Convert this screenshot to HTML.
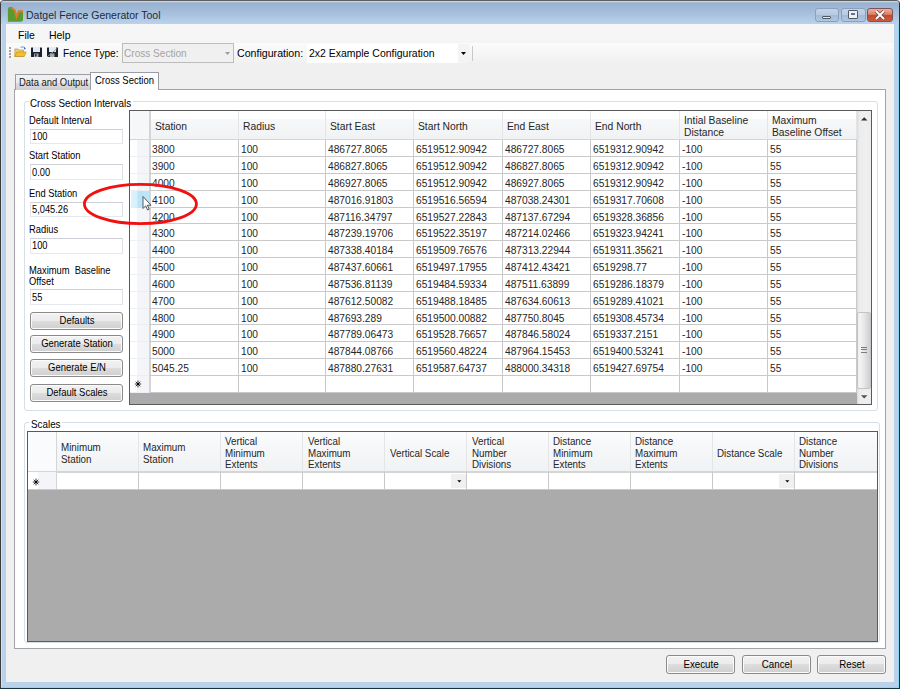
<!DOCTYPE html><html><head><meta charset='utf-8'><style>
*{margin:0;padding:0;box-sizing:border-box}
html,body{width:900px;height:689px;overflow:hidden;background:#ffffff;font-family:"Liberation Sans", sans-serif;position:relative}
.a{position:absolute}
.t{position:absolute;white-space:nowrap;color:#000;line-height:1}
.btn{position:absolute;border:1px solid #8a8a8a;border-radius:3px;
 background:linear-gradient(#f2f2f2 0%,#ebebeb 50%,#dddddd 50%,#cfcfcf 100%);
 box-shadow: inset 0 0 0 1px #fbfbfb;}
.tb{position:absolute;border:1px solid #cdd0d6;border-left-color:#e2e3ea;border-right-color:#dbdfe6;border-bottom-color:#e3e9ef;background:#fff}
.hl{position:absolute;background:#d5d5d5}
</style></head><body><div style='position:absolute;left:0;top:0;width:900px;height:689px;filter:none'>
<div class='a' style='left:0;top:0;width:900px;height:689px;background:#b9d1ea;border:1px solid #153440;border-top-color:#5e5e5e;border-left-color:#3c3c3c;border-radius:4px 4px 0 0'></div>
<div class='a' style='left:1px;top:1px;width:898px;height:23px;background:linear-gradient(#d0deec 0px,#97b1d0 2px,#a6bfdc 12px,#bad2ea 23px);border-radius:3px 3px 0 0'></div>
<div class='a' style='left:1px;top:24px;width:1px;height:664px;background:#d5e3f1'></div>
<div class='a' style='left:898px;top:24px;width:1px;height:664px;background:#8fd6f2'></div>
<div class='a' style='left:1px;top:687px;width:898px;height:1px;background:#8fd6f2'></div>
<div class='a' style='left:6px;top:24px;width:888px;height:658px;background:#f0f0f0'></div>
<div class='a' style='left:6px;top:24px;width:888px;height:19px;background:linear-gradient(#f6f6f6,#f5f5f5)'></div>
<div class='a' style='left:6px;top:43px;width:888px;height:21px;background:linear-gradient(#fbfbfb 0%,#f6f6f6 50%,#f0f0f0 100%)'></div>
<svg class='a' style='left:6px;top:5px' width='20' height='19' viewBox='6 5 20 19'>
<path d='M7.9 9.2 Q7.9 6.9 10.2 6.9 L11.8 6.9 L15.5 10.6 L16.6 16.6 L18.4 10.6 L23 10.6 L23 19.3 Q23 21.8 20.5 21.8 L7.9 21.8 Z' fill='#5a9a2e'/>
<path d='M11.4 7.6 L15 10.6 L16.5 16.8 L18.6 11.2 L23 11.2' stroke='#e77b22' stroke-width='1.9' fill='none' stroke-linejoin='miter'/>
</svg>
<div class='t' style='left:25.57px;top:10.36px;font-size:10.9px;color:#1e2a3a;transform:scaleX(0.963);transform-origin:0 0;'>Datgel Fence Generator Tool</div>
<div class='a' style='left:815px;top:8px;width:24px;height:14px;border:1px solid #8aa0bc;border-radius:3px;background:linear-gradient(#c3d4e8 0%,#b4c9e2 50%,#a3bbd7 50%,#afc6e0 100%)'></div>
<div class='a' style='left:822px;top:15.5px;width:9px;height:3.5px;background:#e8e8e8;border:1px solid #505a66;border-radius:1px'></div>
<div class='a' style='left:841px;top:8px;width:25px;height:14px;border:1px solid #8aa0bc;border-radius:3px;background:linear-gradient(#c3d4e8 0%,#b4c9e2 50%,#a3bbd7 50%,#afc6e0 100%)'></div>
<div class='a' style='left:848px;top:10px;width:9.5px;height:8.5px;background:#f0f0f0;border:1px solid #505a66;border-radius:1px'></div>
<div class='a' style='left:850.5px;top:12.5px;width:4.5px;height:2.5px;background:#5a7898'></div>
<div class='a' style='left:867px;top:8px;width:26px;height:14px;border:1px solid #7c5458;border-radius:3px;background:linear-gradient(#eeb0a0 0%,#dc8068 45%,#c44a2c 50%,#cc5a3c 100%)'></div>
<svg class='a' style='left:874px;top:10px' width='12' height='10' viewBox='0 0 12 10'><path d='M2 1 L10 9 M10 1 L2 9' stroke='#6a3a38' stroke-width='3.2'/><path d='M2 1 L10 9 M10 1 L2 9' stroke='#fff' stroke-width='2'/></svg>

<div class='t' style='left:18.37px;top:29.96px;font-size:10.9px;color:#000;transform:scaleX(0.96);transform-origin:0 0;'>File</div>
<div class='t' style='left:49.07px;top:29.96px;font-size:10.9px;color:#000;transform:scaleX(0.96);transform-origin:0 0;'>Help</div>
<div class='a' style='left:9px;top:47px;width:2px;height:2px;background:#a0a0a0'></div>
<div class='a' style='left:9px;top:50px;width:2px;height:2px;background:#a0a0a0'></div>
<div class='a' style='left:9px;top:53px;width:2px;height:2px;background:#a0a0a0'></div>
<div class='a' style='left:9px;top:56px;width:2px;height:2px;background:#a0a0a0'></div>
<svg class='a' style='left:14px;top:46px' width='13' height='12' viewBox='0 0 13 12'>
<path d='M0.8 3 L4.2 3 L5.2 4 L9.5 4 L9.5 10.5 L0.8 10.5 Z' fill='#e9cf7a' stroke='#c09a3a' stroke-width='0.7'/>
<path d='M0.8 10.5 L2.8 6 L12.2 6 L10.2 10.5 Z' fill='#f2bf2e' stroke='#c4922a' stroke-width='0.7'/>
<path d='M6.5 1.5 Q9 0 11 2' stroke='#8fb0d8' stroke-width='1.1' fill='none'/>
<path d='M10 1 L12 2.8 L10 3.5 Z' fill='#3c6cb8'/>
</svg>
<svg class='a' style='left:31px;top:47px' width='11' height='10' viewBox='0 0 11 10'>
<rect x='0' y='0.5' width='11' height='9.5' fill='#1b2230' rx='0.5'/>
<rect x='2' y='0' width='7' height='5' fill='#e4ebf3'/>
<rect x='3' y='6.5' width='4.5' height='3.5' fill='#a8a8a8'/>
<rect x='4' y='7' width='1.5' height='2.5' fill='#303030'/>
</svg>
<svg class='a' style='left:47px;top:47px' width='11' height='10' viewBox='0 0 11 10'>
<rect x='0' y='0.5' width='11' height='9.5' fill='#1b2230' rx='0.5'/>
<rect x='2' y='0' width='7' height='5' fill='#e4ebf3'/>
<rect x='3' y='6.5' width='4.5' height='3.5' fill='#a8a8a8'/>
<path d='M0 10 L10 1.5' stroke='#9a9a9a' stroke-width='1'/>
</svg>
<div class='t' style='left:62.89px;top:48.06px;font-size:10.9px;color:#000;transform:scaleX(0.93);transform-origin:0 0;'>Fence Type:</div>
<div class='a' style='left:122px;top:43px;width:112px;height:20px;border:1px solid #bcbcbc;background:#f0f0f0'></div>
<div class='t' style='left:123.59px;top:48.46px;font-size:10.9px;color:#a3a3a3;transform:scaleX(0.925);transform-origin:0 0;'>Cross Section</div>
<svg class='a' style='left:225px;top:52px' width='5' height='3'><path d='M0 0 L5 0 L2.5 3 Z' fill='#9a9a9a'/></svg>
<div class='t' style='left:236.86px;top:48.06px;font-size:10.9px;color:#000;transform:scaleX(0.975);transform-origin:0 0;'>Configuration:</div>
<div class='a' style='left:307px;top:44px;width:162px;height:19px;background:#fff'></div>
<div class='a' style='left:458px;top:44px;width:11px;height:19px;background:#f4f4f4'></div>
<div class='t' style='left:309.07px;top:48.16px;font-size:10.9px;color:#000;transform:scaleX(0.96);transform-origin:0 0;'>2x2 Example Configuration</div>
<svg class='a' style='left:461px;top:52px' width='5' height='3'><path d='M0 0 L5 0 L2.5 3 Z' fill='#000'/></svg>
<div class='a' style='left:472px;top:46px;width:1px;height:15px;background:#c8c8c8'></div>
<div class='a' style='left:14px;top:89px;width:872px;height:560px;border:1px solid #a0a3aa;background:#fff'></div>
<div class='a' style='left:15px;top:74px;width:76px;height:16px;border:1px solid #9a9da5;border-bottom:none;background:linear-gradient(#f2f2f2 0%,#ebebeb 50%,#dddddd 50%,#cfcfcf 100%)'></div>
<div class='t' style='left:19.14px;top:78.05px;font-size:10.3px;color:#1a1a1a;transform:scaleX(0.915);transform-origin:0 0;'>Data and Output</div>
<div class='a' style='left:90px;top:72px;width:69px;height:18px;border:1px solid #9a9da5;border-bottom:none;background:#fff'></div>
<div class='t' style='left:94.64px;top:75.95px;font-size:10.3px;color:#000;transform:scaleX(0.92);transform-origin:0 0;'>Cross Section</div>
<div class='a' style='left:24px;top:101px;width:854px;height:310px;border:1px solid #d5dfe5;border-radius:3px'></div>
<div class='a' style='left:29px;top:96px;width:104px;height:10px;background:#fff'></div>
<div class='t' style='left:29.71px;top:98.19px;font-size:10.7px;color:#000;transform:scaleX(0.92);transform-origin:0 0;'>Cross Section Intervals</div>
<div class='t' style='left:28.95px;top:115.68px;font-size:10.1px;color:#000;transform:scaleX(0.925);transform-origin:0 0;'>Default Interval</div>
<div class='t' style='left:28.95px;top:151.48px;font-size:10.1px;color:#000;transform:scaleX(0.925);transform-origin:0 0;'>Start Station</div>
<div class='t' style='left:28.95px;top:188.98px;font-size:10.1px;color:#000;transform:scaleX(0.925);transform-origin:0 0;'>End Station</div>
<div class='t' style='left:28.95px;top:225.28px;font-size:10.1px;color:#000;transform:scaleX(0.925);transform-origin:0 0;'>Radius</div>
<div class='t' style='left:28.95px;top:266.08px;font-size:10.1px;color:#000;transform:scaleX(0.925);transform-origin:0 0;'>Maximum&nbsp; Baseline</div>
<div class='t' style='left:28.95px;top:276.98px;font-size:10.1px;color:#000;transform:scaleX(0.925);transform-origin:0 0;'>Offset</div>
<div class='tb' style='left:30px;top:128.5px;width:93px;height:15.5px'></div>
<div class='t' style='left:31.95px;top:131.85px;font-size:10.3px;color:#000;transform:scaleX(0.9);transform-origin:0 0;'>100</div>
<div class='tb' style='left:30px;top:164.4px;width:93px;height:15.5px'></div>
<div class='t' style='left:31.95px;top:167.75px;font-size:10.3px;color:#000;transform:scaleX(0.9);transform-origin:0 0;'>0.00</div>
<div class='tb' style='left:30px;top:201.9px;width:93px;height:15.5px'></div>
<div class='t' style='left:31.95px;top:205.25px;font-size:10.3px;color:#000;transform:scaleX(0.9);transform-origin:0 0;'>5,045.26</div>
<div class='tb' style='left:30px;top:238.0px;width:93px;height:15.5px'></div>
<div class='t' style='left:31.95px;top:241.35px;font-size:10.3px;color:#000;transform:scaleX(0.9);transform-origin:0 0;'>100</div>
<div class='tb' style='left:30px;top:289.3px;width:93px;height:15.5px'></div>
<div class='t' style='left:31.95px;top:292.65px;font-size:10.3px;color:#000;transform:scaleX(0.9);transform-origin:0 0;'>55</div>
<div class='btn' style='left:30px;top:312.3px;width:93px;height:18px'></div>
<div class='t' style='left:-23.50px;width:200px;text-align:center;top:316.15px;font-size:10.3px;color:#000;transform:scaleX(0.92);transform-origin:50% 0'>Defaults</div>
<div class='btn' style='left:30px;top:335px;width:93px;height:18px'></div>
<div class='t' style='left:-23.50px;width:200px;text-align:center;top:338.85px;font-size:10.3px;color:#000;transform:scaleX(0.92);transform-origin:50% 0'>Generate Station</div>
<div class='btn' style='left:30px;top:359.4px;width:93px;height:18px'></div>
<div class='t' style='left:-23.50px;width:200px;text-align:center;top:363.25px;font-size:10.3px;color:#000;transform:scaleX(0.92);transform-origin:50% 0'>Generate E/N</div>
<div class='btn' style='left:30px;top:383.8px;width:93px;height:18px'></div>
<div class='t' style='left:-23.50px;width:200px;text-align:center;top:387.65px;font-size:10.3px;color:#000;transform:scaleX(0.92);transform-origin:50% 0'>Default Scales</div>
<div class='a' style='left:129px;top:110px;width:743px;height:295px;border:1px solid #5a5a5a;background:#ababab'></div>
<div class='a' style='left:130px;top:111px;width:726.5px;height:28px;background:linear-gradient(#ffffff 0%,#ffffff 28%,#f7f8fa 29%,#f1f2f4 100%)'></div>
<div class='a' style='left:130px;top:138.5px;width:726.5px;height:2px;background:#d5d5d5'></div>
<div class='a' style='left:130px;top:140px;width:726.5px;height:252.71999999999997px;background:#fff'></div>
<div class='a' style='left:130px;top:140px;width:19px;height:252.71999999999997px;background:linear-gradient(90deg,#ffffff 0%,#ffffff 37%,#f4f5f8 38%,#f4f5f8 100%)'></div>
<div class='a' style='left:130px;top:111px;width:19px;height:28px;background:#f6f7f9'></div>
<div class='hl' style='left:149px;top:111px;width:1.6px;height:281.71999999999997px'></div>
<div class='hl' style='left:237.6px;top:111px;width:1px;height:28px;background:#e4e5e7'></div>
<div class='hl' style='left:237.6px;top:140px;width:1px;height:252.71999999999997px;background:#c9c9c9'></div>
<div class='hl' style='left:325.05px;top:111px;width:1px;height:28px;background:#e4e5e7'></div>
<div class='hl' style='left:325.05px;top:140px;width:1px;height:252.71999999999997px;background:#c9c9c9'></div>
<div class='hl' style='left:412.9px;top:111px;width:1px;height:28px;background:#e4e5e7'></div>
<div class='hl' style='left:412.9px;top:140px;width:1px;height:252.71999999999997px;background:#c9c9c9'></div>
<div class='hl' style='left:502.0px;top:111px;width:1px;height:28px;background:#e4e5e7'></div>
<div class='hl' style='left:502.0px;top:140px;width:1px;height:252.71999999999997px;background:#c9c9c9'></div>
<div class='hl' style='left:590.05px;top:111px;width:1px;height:28px;background:#e4e5e7'></div>
<div class='hl' style='left:590.05px;top:140px;width:1px;height:252.71999999999997px;background:#c9c9c9'></div>
<div class='hl' style='left:679.0px;top:111px;width:1px;height:28px;background:#e4e5e7'></div>
<div class='hl' style='left:679.0px;top:140px;width:1px;height:252.71999999999997px;background:#c9c9c9'></div>
<div class='hl' style='left:767.05px;top:111px;width:1px;height:28px;background:#e4e5e7'></div>
<div class='hl' style='left:767.05px;top:140px;width:1px;height:252.71999999999997px;background:#c9c9c9'></div>
<div class='hl' style='left:855.8px;top:111px;width:1px;height:28px;background:#e4e5e7'></div>
<div class='hl' style='left:855.8px;top:140px;width:1px;height:252.71999999999997px;background:#c9c9c9'></div>
<div class='hl' style='left:150px;top:156.1px;width:706.3px;height:1px;background:#c9c9c9'></div>
<div class='hl' style='left:130px;top:156.1px;width:19px;height:1px;background:#eeeff2'></div>
<div class='hl' style='left:150px;top:172.93px;width:706.3px;height:1px;background:#c9c9c9'></div>
<div class='hl' style='left:130px;top:172.93px;width:19px;height:1px;background:#eeeff2'></div>
<div class='hl' style='left:150px;top:189.76px;width:706.3px;height:1px;background:#c9c9c9'></div>
<div class='hl' style='left:130px;top:189.76px;width:19px;height:1px;background:#eeeff2'></div>
<div class='hl' style='left:150px;top:206.58999999999997px;width:706.3px;height:1px;background:#c9c9c9'></div>
<div class='hl' style='left:130px;top:206.58999999999997px;width:19px;height:1px;background:#eeeff2'></div>
<div class='hl' style='left:150px;top:223.42px;width:706.3px;height:1px;background:#c9c9c9'></div>
<div class='hl' style='left:130px;top:223.42px;width:19px;height:1px;background:#eeeff2'></div>
<div class='hl' style='left:150px;top:240.25px;width:706.3px;height:1px;background:#c9c9c9'></div>
<div class='hl' style='left:130px;top:240.25px;width:19px;height:1px;background:#eeeff2'></div>
<div class='hl' style='left:150px;top:257.08px;width:706.3px;height:1px;background:#c9c9c9'></div>
<div class='hl' style='left:130px;top:257.08px;width:19px;height:1px;background:#eeeff2'></div>
<div class='hl' style='left:150px;top:273.90999999999997px;width:706.3px;height:1px;background:#c9c9c9'></div>
<div class='hl' style='left:130px;top:273.90999999999997px;width:19px;height:1px;background:#eeeff2'></div>
<div class='hl' style='left:150px;top:290.74px;width:706.3px;height:1px;background:#c9c9c9'></div>
<div class='hl' style='left:130px;top:290.74px;width:19px;height:1px;background:#eeeff2'></div>
<div class='hl' style='left:150px;top:307.56999999999994px;width:706.3px;height:1px;background:#c9c9c9'></div>
<div class='hl' style='left:130px;top:307.56999999999994px;width:19px;height:1px;background:#eeeff2'></div>
<div class='hl' style='left:150px;top:324.4px;width:706.3px;height:1px;background:#c9c9c9'></div>
<div class='hl' style='left:130px;top:324.4px;width:19px;height:1px;background:#eeeff2'></div>
<div class='hl' style='left:150px;top:341.23px;width:706.3px;height:1px;background:#c9c9c9'></div>
<div class='hl' style='left:130px;top:341.23px;width:19px;height:1px;background:#eeeff2'></div>
<div class='hl' style='left:150px;top:358.05999999999995px;width:706.3px;height:1px;background:#c9c9c9'></div>
<div class='hl' style='left:130px;top:358.05999999999995px;width:19px;height:1px;background:#eeeff2'></div>
<div class='hl' style='left:150px;top:374.89px;width:706.3px;height:1px;background:#c9c9c9'></div>
<div class='hl' style='left:130px;top:374.89px;width:19px;height:1px;background:#eeeff2'></div>
<div class='hl' style='left:150px;top:391.71999999999997px;width:706.3px;height:1px;background:#c9c9c9'></div>
<div class='hl' style='left:130px;top:391.71999999999997px;width:19px;height:1px;background:#eeeff2'></div>
<div class='t' style='left:154.68px;top:122.00px;font-size:10.0px;color:#262626;transform:scaleX(1.03);transform-origin:0 0;'>Station</div>
<div class='t' style='left:242.78px;top:122.00px;font-size:10.0px;color:#262626;transform:scaleX(1.03);transform-origin:0 0;'>Radius</div>
<div class='t' style='left:330.23px;top:122.00px;font-size:10.0px;color:#262626;transform:scaleX(1.03);transform-origin:0 0;'>Start East</div>
<div class='t' style='left:418.08px;top:122.00px;font-size:10.0px;color:#262626;transform:scaleX(1.03);transform-origin:0 0;'>Start North</div>
<div class='t' style='left:507.18px;top:122.00px;font-size:10.0px;color:#262626;transform:scaleX(1.03);transform-origin:0 0;'>End East</div>
<div class='t' style='left:595.23px;top:122.00px;font-size:10.0px;color:#262626;transform:scaleX(1.03);transform-origin:0 0;'>End North</div>
<div class='t' style='left:684.18px;top:116.30px;font-size:10.0px;color:#262626;transform:scaleX(1.03);transform-origin:0 0;'>Intial Baseline</div>
<div class='t' style='left:684.18px;top:127.90px;font-size:10.0px;color:#262626;transform:scaleX(1.03);transform-origin:0 0;'>Distance</div>
<div class='t' style='left:772.23px;top:116.30px;font-size:10.0px;color:#262626;transform:scaleX(1.03);transform-origin:0 0;'>Maximum</div>
<div class='t' style='left:772.23px;top:127.90px;font-size:10.0px;color:#262626;transform:scaleX(1.03);transform-origin:0 0;'>Baseline Offset</div>
<div class='t' style='left:152.49px;top:144.26px;font-size:10.85px;color:#262626;transform:scaleX(0.94);transform-origin:0 0;'>3800</div>
<div class='t' style='left:240.59px;top:144.26px;font-size:10.85px;color:#262626;transform:scaleX(0.94);transform-origin:0 0;'>100</div>
<div class='t' style='left:328.04px;top:144.26px;font-size:10.85px;color:#262626;transform:scaleX(0.94);transform-origin:0 0;'>486727.8065</div>
<div class='t' style='left:415.89px;top:144.26px;font-size:10.85px;color:#262626;transform:scaleX(0.94);transform-origin:0 0;'>6519512.90942</div>
<div class='t' style='left:504.99px;top:144.26px;font-size:10.85px;color:#262626;transform:scaleX(0.94);transform-origin:0 0;'>486727.8065</div>
<div class='t' style='left:593.04px;top:144.26px;font-size:10.85px;color:#262626;transform:scaleX(0.94);transform-origin:0 0;'>6519312.90942</div>
<div class='t' style='left:681.99px;top:144.26px;font-size:10.85px;color:#262626;transform:scaleX(0.94);transform-origin:0 0;'>-100</div>
<div class='t' style='left:770.04px;top:144.26px;font-size:10.85px;color:#262626;transform:scaleX(0.94);transform-origin:0 0;'>55</div>
<div class='t' style='left:152.49px;top:161.09px;font-size:10.85px;color:#262626;transform:scaleX(0.94);transform-origin:0 0;'>3900</div>
<div class='t' style='left:240.59px;top:161.09px;font-size:10.85px;color:#262626;transform:scaleX(0.94);transform-origin:0 0;'>100</div>
<div class='t' style='left:328.04px;top:161.09px;font-size:10.85px;color:#262626;transform:scaleX(0.94);transform-origin:0 0;'>486827.8065</div>
<div class='t' style='left:415.89px;top:161.09px;font-size:10.85px;color:#262626;transform:scaleX(0.94);transform-origin:0 0;'>6519512.90942</div>
<div class='t' style='left:504.99px;top:161.09px;font-size:10.85px;color:#262626;transform:scaleX(0.94);transform-origin:0 0;'>486827.8065</div>
<div class='t' style='left:593.04px;top:161.09px;font-size:10.85px;color:#262626;transform:scaleX(0.94);transform-origin:0 0;'>6519312.90942</div>
<div class='t' style='left:681.99px;top:161.09px;font-size:10.85px;color:#262626;transform:scaleX(0.94);transform-origin:0 0;'>-100</div>
<div class='t' style='left:770.04px;top:161.09px;font-size:10.85px;color:#262626;transform:scaleX(0.94);transform-origin:0 0;'>55</div>
<div class='t' style='left:152.49px;top:177.92px;font-size:10.85px;color:#262626;transform:scaleX(0.94);transform-origin:0 0;'>4000</div>
<div class='t' style='left:240.59px;top:177.92px;font-size:10.85px;color:#262626;transform:scaleX(0.94);transform-origin:0 0;'>100</div>
<div class='t' style='left:328.04px;top:177.92px;font-size:10.85px;color:#262626;transform:scaleX(0.94);transform-origin:0 0;'>486927.8065</div>
<div class='t' style='left:415.89px;top:177.92px;font-size:10.85px;color:#262626;transform:scaleX(0.94);transform-origin:0 0;'>6519512.90942</div>
<div class='t' style='left:504.99px;top:177.92px;font-size:10.85px;color:#262626;transform:scaleX(0.94);transform-origin:0 0;'>486927.8065</div>
<div class='t' style='left:593.04px;top:177.92px;font-size:10.85px;color:#262626;transform:scaleX(0.94);transform-origin:0 0;'>6519312.90942</div>
<div class='t' style='left:681.99px;top:177.92px;font-size:10.85px;color:#262626;transform:scaleX(0.94);transform-origin:0 0;'>-100</div>
<div class='t' style='left:770.04px;top:177.92px;font-size:10.85px;color:#262626;transform:scaleX(0.94);transform-origin:0 0;'>55</div>
<div class='t' style='left:152.49px;top:194.75px;font-size:10.85px;color:#262626;transform:scaleX(0.94);transform-origin:0 0;'>4100</div>
<div class='t' style='left:240.59px;top:194.75px;font-size:10.85px;color:#262626;transform:scaleX(0.94);transform-origin:0 0;'>100</div>
<div class='t' style='left:328.04px;top:194.75px;font-size:10.85px;color:#262626;transform:scaleX(0.94);transform-origin:0 0;'>487016.91803</div>
<div class='t' style='left:415.89px;top:194.75px;font-size:10.85px;color:#262626;transform:scaleX(0.94);transform-origin:0 0;'>6519516.56594</div>
<div class='t' style='left:504.99px;top:194.75px;font-size:10.85px;color:#262626;transform:scaleX(0.94);transform-origin:0 0;'>487038.24301</div>
<div class='t' style='left:593.04px;top:194.75px;font-size:10.85px;color:#262626;transform:scaleX(0.94);transform-origin:0 0;'>6519317.70608</div>
<div class='t' style='left:681.99px;top:194.75px;font-size:10.85px;color:#262626;transform:scaleX(0.94);transform-origin:0 0;'>-100</div>
<div class='t' style='left:770.04px;top:194.75px;font-size:10.85px;color:#262626;transform:scaleX(0.94);transform-origin:0 0;'>55</div>
<div class='t' style='left:152.49px;top:211.58px;font-size:10.85px;color:#262626;transform:scaleX(0.94);transform-origin:0 0;'>4200</div>
<div class='t' style='left:240.59px;top:211.58px;font-size:10.85px;color:#262626;transform:scaleX(0.94);transform-origin:0 0;'>100</div>
<div class='t' style='left:328.04px;top:211.58px;font-size:10.85px;color:#262626;transform:scaleX(0.94);transform-origin:0 0;'>487116.34797</div>
<div class='t' style='left:415.89px;top:211.58px;font-size:10.85px;color:#262626;transform:scaleX(0.94);transform-origin:0 0;'>6519527.22843</div>
<div class='t' style='left:504.99px;top:211.58px;font-size:10.85px;color:#262626;transform:scaleX(0.94);transform-origin:0 0;'>487137.67294</div>
<div class='t' style='left:593.04px;top:211.58px;font-size:10.85px;color:#262626;transform:scaleX(0.94);transform-origin:0 0;'>6519328.36856</div>
<div class='t' style='left:681.99px;top:211.58px;font-size:10.85px;color:#262626;transform:scaleX(0.94);transform-origin:0 0;'>-100</div>
<div class='t' style='left:770.04px;top:211.58px;font-size:10.85px;color:#262626;transform:scaleX(0.94);transform-origin:0 0;'>55</div>
<div class='t' style='left:152.49px;top:228.41px;font-size:10.85px;color:#262626;transform:scaleX(0.94);transform-origin:0 0;'>4300</div>
<div class='t' style='left:240.59px;top:228.41px;font-size:10.85px;color:#262626;transform:scaleX(0.94);transform-origin:0 0;'>100</div>
<div class='t' style='left:328.04px;top:228.41px;font-size:10.85px;color:#262626;transform:scaleX(0.94);transform-origin:0 0;'>487239.19706</div>
<div class='t' style='left:415.89px;top:228.41px;font-size:10.85px;color:#262626;transform:scaleX(0.94);transform-origin:0 0;'>6519522.35197</div>
<div class='t' style='left:504.99px;top:228.41px;font-size:10.85px;color:#262626;transform:scaleX(0.94);transform-origin:0 0;'>487214.02466</div>
<div class='t' style='left:593.04px;top:228.41px;font-size:10.85px;color:#262626;transform:scaleX(0.94);transform-origin:0 0;'>6519323.94241</div>
<div class='t' style='left:681.99px;top:228.41px;font-size:10.85px;color:#262626;transform:scaleX(0.94);transform-origin:0 0;'>-100</div>
<div class='t' style='left:770.04px;top:228.41px;font-size:10.85px;color:#262626;transform:scaleX(0.94);transform-origin:0 0;'>55</div>
<div class='t' style='left:152.49px;top:245.24px;font-size:10.85px;color:#262626;transform:scaleX(0.94);transform-origin:0 0;'>4400</div>
<div class='t' style='left:240.59px;top:245.24px;font-size:10.85px;color:#262626;transform:scaleX(0.94);transform-origin:0 0;'>100</div>
<div class='t' style='left:328.04px;top:245.24px;font-size:10.85px;color:#262626;transform:scaleX(0.94);transform-origin:0 0;'>487338.40184</div>
<div class='t' style='left:415.89px;top:245.24px;font-size:10.85px;color:#262626;transform:scaleX(0.94);transform-origin:0 0;'>6519509.76576</div>
<div class='t' style='left:504.99px;top:245.24px;font-size:10.85px;color:#262626;transform:scaleX(0.94);transform-origin:0 0;'>487313.22944</div>
<div class='t' style='left:593.04px;top:245.24px;font-size:10.85px;color:#262626;transform:scaleX(0.94);transform-origin:0 0;'>6519311.35621</div>
<div class='t' style='left:681.99px;top:245.24px;font-size:10.85px;color:#262626;transform:scaleX(0.94);transform-origin:0 0;'>-100</div>
<div class='t' style='left:770.04px;top:245.24px;font-size:10.85px;color:#262626;transform:scaleX(0.94);transform-origin:0 0;'>55</div>
<div class='t' style='left:152.49px;top:262.07px;font-size:10.85px;color:#262626;transform:scaleX(0.94);transform-origin:0 0;'>4500</div>
<div class='t' style='left:240.59px;top:262.07px;font-size:10.85px;color:#262626;transform:scaleX(0.94);transform-origin:0 0;'>100</div>
<div class='t' style='left:328.04px;top:262.07px;font-size:10.85px;color:#262626;transform:scaleX(0.94);transform-origin:0 0;'>487437.60661</div>
<div class='t' style='left:415.89px;top:262.07px;font-size:10.85px;color:#262626;transform:scaleX(0.94);transform-origin:0 0;'>6519497.17955</div>
<div class='t' style='left:504.99px;top:262.07px;font-size:10.85px;color:#262626;transform:scaleX(0.94);transform-origin:0 0;'>487412.43421</div>
<div class='t' style='left:593.04px;top:262.07px;font-size:10.85px;color:#262626;transform:scaleX(0.94);transform-origin:0 0;'>6519298.77</div>
<div class='t' style='left:681.99px;top:262.07px;font-size:10.85px;color:#262626;transform:scaleX(0.94);transform-origin:0 0;'>-100</div>
<div class='t' style='left:770.04px;top:262.07px;font-size:10.85px;color:#262626;transform:scaleX(0.94);transform-origin:0 0;'>55</div>
<div class='t' style='left:152.49px;top:278.90px;font-size:10.85px;color:#262626;transform:scaleX(0.94);transform-origin:0 0;'>4600</div>
<div class='t' style='left:240.59px;top:278.90px;font-size:10.85px;color:#262626;transform:scaleX(0.94);transform-origin:0 0;'>100</div>
<div class='t' style='left:328.04px;top:278.90px;font-size:10.85px;color:#262626;transform:scaleX(0.94);transform-origin:0 0;'>487536.81139</div>
<div class='t' style='left:415.89px;top:278.90px;font-size:10.85px;color:#262626;transform:scaleX(0.94);transform-origin:0 0;'>6519484.59334</div>
<div class='t' style='left:504.99px;top:278.90px;font-size:10.85px;color:#262626;transform:scaleX(0.94);transform-origin:0 0;'>487511.63899</div>
<div class='t' style='left:593.04px;top:278.90px;font-size:10.85px;color:#262626;transform:scaleX(0.94);transform-origin:0 0;'>6519286.18379</div>
<div class='t' style='left:681.99px;top:278.90px;font-size:10.85px;color:#262626;transform:scaleX(0.94);transform-origin:0 0;'>-100</div>
<div class='t' style='left:770.04px;top:278.90px;font-size:10.85px;color:#262626;transform:scaleX(0.94);transform-origin:0 0;'>55</div>
<div class='t' style='left:152.49px;top:295.73px;font-size:10.85px;color:#262626;transform:scaleX(0.94);transform-origin:0 0;'>4700</div>
<div class='t' style='left:240.59px;top:295.73px;font-size:10.85px;color:#262626;transform:scaleX(0.94);transform-origin:0 0;'>100</div>
<div class='t' style='left:328.04px;top:295.73px;font-size:10.85px;color:#262626;transform:scaleX(0.94);transform-origin:0 0;'>487612.50082</div>
<div class='t' style='left:415.89px;top:295.73px;font-size:10.85px;color:#262626;transform:scaleX(0.94);transform-origin:0 0;'>6519488.18485</div>
<div class='t' style='left:504.99px;top:295.73px;font-size:10.85px;color:#262626;transform:scaleX(0.94);transform-origin:0 0;'>487634.60613</div>
<div class='t' style='left:593.04px;top:295.73px;font-size:10.85px;color:#262626;transform:scaleX(0.94);transform-origin:0 0;'>6519289.41021</div>
<div class='t' style='left:681.99px;top:295.73px;font-size:10.85px;color:#262626;transform:scaleX(0.94);transform-origin:0 0;'>-100</div>
<div class='t' style='left:770.04px;top:295.73px;font-size:10.85px;color:#262626;transform:scaleX(0.94);transform-origin:0 0;'>55</div>
<div class='t' style='left:152.49px;top:312.56px;font-size:10.85px;color:#262626;transform:scaleX(0.94);transform-origin:0 0;'>4800</div>
<div class='t' style='left:240.59px;top:312.56px;font-size:10.85px;color:#262626;transform:scaleX(0.94);transform-origin:0 0;'>100</div>
<div class='t' style='left:328.04px;top:312.56px;font-size:10.85px;color:#262626;transform:scaleX(0.94);transform-origin:0 0;'>487693.289</div>
<div class='t' style='left:415.89px;top:312.56px;font-size:10.85px;color:#262626;transform:scaleX(0.94);transform-origin:0 0;'>6519500.00882</div>
<div class='t' style='left:504.99px;top:312.56px;font-size:10.85px;color:#262626;transform:scaleX(0.94);transform-origin:0 0;'>487750.8045</div>
<div class='t' style='left:593.04px;top:312.56px;font-size:10.85px;color:#262626;transform:scaleX(0.94);transform-origin:0 0;'>6519308.45734</div>
<div class='t' style='left:681.99px;top:312.56px;font-size:10.85px;color:#262626;transform:scaleX(0.94);transform-origin:0 0;'>-100</div>
<div class='t' style='left:770.04px;top:312.56px;font-size:10.85px;color:#262626;transform:scaleX(0.94);transform-origin:0 0;'>55</div>
<div class='t' style='left:152.49px;top:329.39px;font-size:10.85px;color:#262626;transform:scaleX(0.94);transform-origin:0 0;'>4900</div>
<div class='t' style='left:240.59px;top:329.39px;font-size:10.85px;color:#262626;transform:scaleX(0.94);transform-origin:0 0;'>100</div>
<div class='t' style='left:328.04px;top:329.39px;font-size:10.85px;color:#262626;transform:scaleX(0.94);transform-origin:0 0;'>487789.06473</div>
<div class='t' style='left:415.89px;top:329.39px;font-size:10.85px;color:#262626;transform:scaleX(0.94);transform-origin:0 0;'>6519528.76657</div>
<div class='t' style='left:504.99px;top:329.39px;font-size:10.85px;color:#262626;transform:scaleX(0.94);transform-origin:0 0;'>487846.58024</div>
<div class='t' style='left:593.04px;top:329.39px;font-size:10.85px;color:#262626;transform:scaleX(0.94);transform-origin:0 0;'>6519337.2151</div>
<div class='t' style='left:681.99px;top:329.39px;font-size:10.85px;color:#262626;transform:scaleX(0.94);transform-origin:0 0;'>-100</div>
<div class='t' style='left:770.04px;top:329.39px;font-size:10.85px;color:#262626;transform:scaleX(0.94);transform-origin:0 0;'>55</div>
<div class='t' style='left:152.49px;top:346.22px;font-size:10.85px;color:#262626;transform:scaleX(0.94);transform-origin:0 0;'>5000</div>
<div class='t' style='left:240.59px;top:346.22px;font-size:10.85px;color:#262626;transform:scaleX(0.94);transform-origin:0 0;'>100</div>
<div class='t' style='left:328.04px;top:346.22px;font-size:10.85px;color:#262626;transform:scaleX(0.94);transform-origin:0 0;'>487844.08766</div>
<div class='t' style='left:415.89px;top:346.22px;font-size:10.85px;color:#262626;transform:scaleX(0.94);transform-origin:0 0;'>6519560.48224</div>
<div class='t' style='left:504.99px;top:346.22px;font-size:10.85px;color:#262626;transform:scaleX(0.94);transform-origin:0 0;'>487964.15453</div>
<div class='t' style='left:593.04px;top:346.22px;font-size:10.85px;color:#262626;transform:scaleX(0.94);transform-origin:0 0;'>6519400.53241</div>
<div class='t' style='left:681.99px;top:346.22px;font-size:10.85px;color:#262626;transform:scaleX(0.94);transform-origin:0 0;'>-100</div>
<div class='t' style='left:770.04px;top:346.22px;font-size:10.85px;color:#262626;transform:scaleX(0.94);transform-origin:0 0;'>55</div>
<div class='t' style='left:152.49px;top:363.05px;font-size:10.85px;color:#262626;transform:scaleX(0.94);transform-origin:0 0;'>5045.25</div>
<div class='t' style='left:240.59px;top:363.05px;font-size:10.85px;color:#262626;transform:scaleX(0.94);transform-origin:0 0;'>100</div>
<div class='t' style='left:328.04px;top:363.05px;font-size:10.85px;color:#262626;transform:scaleX(0.94);transform-origin:0 0;'>487880.27631</div>
<div class='t' style='left:415.89px;top:363.05px;font-size:10.85px;color:#262626;transform:scaleX(0.94);transform-origin:0 0;'>6519587.64737</div>
<div class='t' style='left:504.99px;top:363.05px;font-size:10.85px;color:#262626;transform:scaleX(0.94);transform-origin:0 0;'>488000.34318</div>
<div class='t' style='left:593.04px;top:363.05px;font-size:10.85px;color:#262626;transform:scaleX(0.94);transform-origin:0 0;'>6519427.69754</div>
<div class='t' style='left:681.99px;top:363.05px;font-size:10.85px;color:#262626;transform:scaleX(0.94);transform-origin:0 0;'>-100</div>
<div class='t' style='left:770.04px;top:363.05px;font-size:10.85px;color:#262626;transform:scaleX(0.94);transform-origin:0 0;'>55</div>
<div class='a' style='left:131px;top:190.5px;width:18px;height:17px;background:linear-gradient(90deg,#e0f3fb 0%,#d6eefa 35%,#b9e3f8 40%,#bee6f9 100%)'></div>
<svg class='a' style='left:133.5px;top:380px' width='8' height='8' viewBox='0 0 8 8'><path d='M4 0.5 V7.5 M0.8 4 H7.2 M1.7 1.7 L6.3 6.3 M6.3 1.7 L1.7 6.3' stroke='#000' stroke-width='0.8'/><circle cx='4' cy='4' r='1.1' fill='#000'/></svg>
<div class='a' style='left:856.5px;top:111px;width:14.5px;height:293px;background:linear-gradient(90deg,#d8d8d8,#ececec 15%,#efefef 70%,#ebebeb)'></div>
<svg class='a' style='left:861px;top:116.5px' width='7' height='4'><path d='M0 3.6 L3.2 0.3 L6.5 3.6 Z' fill='#303030'/></svg>
<svg class='a' style='left:861px;top:394.5px' width='7' height='4'><path d='M0 0.3 L3.2 3.6 L6.5 0.3 Z' fill='#505050'/></svg>
<div class='a' style='left:857px;top:311.5px;width:14px;height:77px;border:1px solid #c4c4c8;border-radius:2px;background:linear-gradient(90deg,#ececec 0%,#f4f4f4 15%,#e8e8e8 50%,#dcdcdf 70%,#cfcfd3 100%)'></div>
<div class='a' style='left:861px;top:346.5px;width:6px;height:1px;background:#7a7a7a'></div>
<div class='a' style='left:861px;top:349.0px;width:6px;height:1px;background:#7a7a7a'></div>
<div class='a' style='left:861px;top:351.5px;width:6px;height:1px;background:#7a7a7a'></div>
<div class='a' style='left:24px;top:422px;width:856px;height:221px;border:1px solid #d5dfe5;border-radius:3px'></div>
<div class='a' style='left:29px;top:417px;width:33px;height:10px;background:#fff'></div>
<div class='t' style='left:30.81px;top:419.49px;font-size:10.7px;color:#000;transform:scaleX(0.92);transform-origin:0 0;'>Scales</div>
<div class='a' style='left:27px;top:431px;width:851px;height:211px;border:1px solid #5a5a5a;background:#ababab'></div>
<div class='a' style='left:28px;top:432px;width:849px;height:39px;background:linear-gradient(#fdfdfd 0%,#f7f8fa 30%,#f1f2f4 100%)'></div>
<div class='a' style='left:28px;top:471px;width:849px;height:2px;background:#d5d5d5'></div>
<div class='a' style='left:28px;top:472.5px;width:849px;height:16.5px;background:#fff'></div>
<div class='a' style='left:28px;top:472px;width:27.5px;height:17px;background:linear-gradient(90deg,#ffffff 0%,#ffffff 35%,#f4f5f8 36%,#f4f5f8 100%)'></div>
<div class='a' style='left:28px;top:432px;width:27.5px;height:39px;background:#fafbfc'></div>
<div class='hl' style='left:55.5px;top:432px;width:1.6px;height:57px'></div>
<div class='hl' style='left:137.8px;top:432px;width:1px;height:39px;background:#e4e5e7'></div>
<div class='hl' style='left:137.8px;top:472px;width:1px;height:17px;background:#c9c9c9'></div>
<div class='hl' style='left:219.7px;top:432px;width:1px;height:39px;background:#e4e5e7'></div>
<div class='hl' style='left:219.7px;top:472px;width:1px;height:17px;background:#c9c9c9'></div>
<div class='hl' style='left:302.2px;top:432px;width:1px;height:39px;background:#e4e5e7'></div>
<div class='hl' style='left:302.2px;top:472px;width:1px;height:17px;background:#c9c9c9'></div>
<div class='hl' style='left:384.0px;top:432px;width:1px;height:39px;background:#e4e5e7'></div>
<div class='hl' style='left:384.0px;top:472px;width:1px;height:17px;background:#c9c9c9'></div>
<div class='hl' style='left:466.2px;top:432px;width:1px;height:39px;background:#e4e5e7'></div>
<div class='hl' style='left:466.2px;top:472px;width:1px;height:17px;background:#c9c9c9'></div>
<div class='hl' style='left:547.6px;top:432px;width:1px;height:39px;background:#e4e5e7'></div>
<div class='hl' style='left:547.6px;top:472px;width:1px;height:17px;background:#c9c9c9'></div>
<div class='hl' style='left:629.9px;top:432px;width:1px;height:39px;background:#e4e5e7'></div>
<div class='hl' style='left:629.9px;top:472px;width:1px;height:17px;background:#c9c9c9'></div>
<div class='hl' style='left:711.7px;top:432px;width:1px;height:39px;background:#e4e5e7'></div>
<div class='hl' style='left:711.7px;top:472px;width:1px;height:17px;background:#c9c9c9'></div>
<div class='hl' style='left:793.9px;top:432px;width:1px;height:39px;background:#e4e5e7'></div>
<div class='hl' style='left:793.9px;top:472px;width:1px;height:17px;background:#c9c9c9'></div>
<div class='hl' style='left:28px;top:488.5px;width:849px;height:1px;background:#c9c9c9'></div>
<div class='t' style='left:61.21px;top:442.60px;font-size:10.0px;color:#262626;transform:scaleX(0.98);transform-origin:0 0;'>Minimum</div>
<div class='t' style='left:61.21px;top:454.50px;font-size:10.0px;color:#262626;transform:scaleX(0.98);transform-origin:0 0;'>Station</div>
<div class='t' style='left:143.31px;top:442.60px;font-size:10.0px;color:#262626;transform:scaleX(0.98);transform-origin:0 0;'>Maximum</div>
<div class='t' style='left:143.31px;top:454.50px;font-size:10.0px;color:#262626;transform:scaleX(0.98);transform-origin:0 0;'>Station</div>
<div class='t' style='left:225.21px;top:436.60px;font-size:10.0px;color:#262626;transform:scaleX(0.98);transform-origin:0 0;'>Vertical</div>
<div class='t' style='left:225.21px;top:448.50px;font-size:10.0px;color:#262626;transform:scaleX(0.98);transform-origin:0 0;'>Minimum</div>
<div class='t' style='left:225.21px;top:460.40px;font-size:10.0px;color:#262626;transform:scaleX(0.98);transform-origin:0 0;'>Extents</div>
<div class='t' style='left:307.71px;top:436.60px;font-size:10.0px;color:#262626;transform:scaleX(0.98);transform-origin:0 0;'>Vertical</div>
<div class='t' style='left:307.71px;top:448.50px;font-size:10.0px;color:#262626;transform:scaleX(0.98);transform-origin:0 0;'>Maximum</div>
<div class='t' style='left:307.71px;top:460.40px;font-size:10.0px;color:#262626;transform:scaleX(0.98);transform-origin:0 0;'>Extents</div>
<div class='t' style='left:389.51px;top:448.60px;font-size:10.0px;color:#262626;transform:scaleX(0.98);transform-origin:0 0;'>Vertical Scale</div>
<div class='t' style='left:471.71px;top:436.60px;font-size:10.0px;color:#262626;transform:scaleX(0.98);transform-origin:0 0;'>Vertical</div>
<div class='t' style='left:471.71px;top:448.50px;font-size:10.0px;color:#262626;transform:scaleX(0.98);transform-origin:0 0;'>Number</div>
<div class='t' style='left:471.71px;top:460.40px;font-size:10.0px;color:#262626;transform:scaleX(0.98);transform-origin:0 0;'>Divisions</div>
<div class='t' style='left:553.11px;top:436.60px;font-size:10.0px;color:#262626;transform:scaleX(0.98);transform-origin:0 0;'>Distance</div>
<div class='t' style='left:553.11px;top:448.50px;font-size:10.0px;color:#262626;transform:scaleX(0.98);transform-origin:0 0;'>Minimum</div>
<div class='t' style='left:553.11px;top:460.40px;font-size:10.0px;color:#262626;transform:scaleX(0.98);transform-origin:0 0;'>Extents</div>
<div class='t' style='left:635.41px;top:436.60px;font-size:10.0px;color:#262626;transform:scaleX(0.98);transform-origin:0 0;'>Distance</div>
<div class='t' style='left:635.41px;top:448.50px;font-size:10.0px;color:#262626;transform:scaleX(0.98);transform-origin:0 0;'>Maximum</div>
<div class='t' style='left:635.41px;top:460.40px;font-size:10.0px;color:#262626;transform:scaleX(0.98);transform-origin:0 0;'>Extents</div>
<div class='t' style='left:717.21px;top:448.60px;font-size:10.0px;color:#262626;transform:scaleX(0.98);transform-origin:0 0;'>Distance Scale</div>
<div class='t' style='left:799.41px;top:436.60px;font-size:10.0px;color:#262626;transform:scaleX(0.98);transform-origin:0 0;'>Distance</div>
<div class='t' style='left:799.41px;top:448.50px;font-size:10.0px;color:#262626;transform:scaleX(0.98);transform-origin:0 0;'>Number</div>
<div class='t' style='left:799.41px;top:460.40px;font-size:10.0px;color:#262626;transform:scaleX(0.98);transform-origin:0 0;'>Divisions</div>
<svg class='a' style='left:32px;top:477.5px' width='8' height='8' viewBox='0 0 8 8'><path d='M4 0.5 V7.5 M0.8 4 H7.2 M1.7 1.7 L6.3 6.3 M6.3 1.7 L1.7 6.3' stroke='#000' stroke-width='0.8'/><circle cx='4' cy='4' r='1.1' fill='#000'/></svg>
<div class='a' style='left:451.4px;top:473.5px;width:14.8px;height:14.3px;background:#f0f0f0'></div>
<svg class='a' style='left:457.4px;top:480.3px' width='5' height='3'><path d='M0.3 0.2 L4.3 0.2 L2.3 2.6 Z' fill='#000'/></svg>
<div class='a' style='left:779.1px;top:473.5px;width:14.8px;height:14.3px;background:#f0f0f0'></div>
<svg class='a' style='left:785.1px;top:480.3px' width='5' height='3'><path d='M0.3 0.2 L4.3 0.2 L2.3 2.6 Z' fill='#000'/></svg>
<div class='btn' style='left:666px;top:655px;width:69px;height:19px'></div>
<div class='t' style='left:600.50px;width:200px;text-align:center;top:658.80px;font-size:10.6px;color:#000;transform:scaleX(0.92);transform-origin:50% 0'>Execute</div>
<div class='btn' style='left:742px;top:655px;width:69px;height:19px'></div>
<div class='t' style='left:676.50px;width:200px;text-align:center;top:658.80px;font-size:10.6px;color:#000;transform:scaleX(0.92);transform-origin:50% 0'>Cancel</div>
<div class='btn' style='left:817px;top:655px;width:69px;height:19px'></div>
<div class='t' style='left:751.50px;width:200px;text-align:center;top:658.80px;font-size:10.6px;color:#000;transform:scaleX(0.92);transform-origin:50% 0'>Reset</div>
<svg class='a' style='left:0;top:0' width='900' height='689'>
<ellipse cx='140.4' cy='204' rx='56' ry='19.7' fill='none' stroke='#f01010' stroke-width='2.8'/>
<path d='M143 196.5 L143 208.5 L145.7 205.8 L147.6 210 L149.2 209.2 L147.4 205.2 L151 205.2 Z' fill='#fff' stroke='#333' stroke-width='0.8'/>
</svg>
</div></body></html>
